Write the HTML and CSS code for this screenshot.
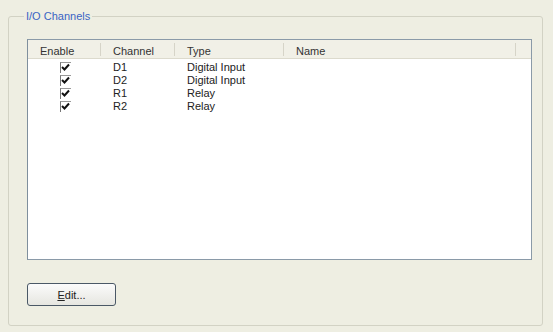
FILE: index.html
```html
<!DOCTYPE html>
<html lang="en">
<head>
	<meta charset="UTF-8">
	<title>I/O Channels</title>
	<link rel="stylesheet" href="styles.css">
</head>
<body>
	<fieldset class="group">
		<legend>I/O Channels</legend>
		<div class="list">
			<div class="head">
				<div class="col c1">Enable</div>
				<div class="col c2">Channel</div>
				<div class="col c3">Type</div>
				<div class="col c4">Name</div>
				<div class="col c5"></div>
			</div>
			<div class="row">
				<div class="c1"><span class="chk"><svg width="11" height="11" viewBox="0 0 11 11"><path d="M2 5 L4.5 7.5 L9 2.5" fill="none" stroke="#111" stroke-width="2"/></svg></span></div>
				<div class="c2">D1</div>
				<div class="c3">Digital Input</div>
			</div>
			<div class="row">
				<div class="c1"><span class="chk"><svg width="11" height="11" viewBox="0 0 11 11"><path d="M2 5 L4.5 7.5 L9 2.5" fill="none" stroke="#111" stroke-width="2"/></svg></span></div>
				<div class="c2">D2</div>
				<div class="c3">Digital Input</div>
			</div>
			<div class="row">
				<div class="c1"><span class="chk"><svg width="11" height="11" viewBox="0 0 11 11"><path d="M2 5 L4.5 7.5 L9 2.5" fill="none" stroke="#111" stroke-width="2"/></svg></span></div>
				<div class="c2">R1</div>
				<div class="c3">Relay</div>
			</div>
			<div class="row">
				<div class="c1"><span class="chk"><svg width="11" height="11" viewBox="0 0 11 11"><path d="M2 5 L4.5 7.5 L9 2.5" fill="none" stroke="#111" stroke-width="2"/></svg></span></div>
				<div class="c2">R2</div>
				<div class="c3">Relay</div>
			</div>
		</div>
		<button class="btn"><u>E</u>dit...</button>
	</fieldset>
</body>
</html>
```

FILE: styles.css
```css
body{margin:0;background:#eeeee2;font-family:"Liberation Sans",Arial,sans-serif;font-size:11px;color:#222;}

.group{margin:10px 0 0 8px;width:535px;height:316px;box-sizing:border-box;padding:16px 0 0 18px;border:1px solid #d2d2c4;border-radius:3px;}
.group legend{margin-left:-3px;padding:0 2px;color:#3a64c4;line-height:13px;font-size:11px;}

.list{width:505px;height:221px;box-sizing:border-box;background:#fff;border:1px solid #8a9aa8;border-left-color:#7f8f9d;}

.head{display:flex;height:18px;background:#f1f0e7;border-bottom:1px solid #dcdacd;color:#333;}
.head .col{box-sizing:border-box;padding-left:12px;padding-top:2px;border-right:1px solid #d6d4c8;margin:3px 0 2px;line-height:12px;}
.c1{width:73px;}
.c2{width:74px;}
.c3{width:109px;}
.c4{width:232px;}
.c5{flex:1;border-right:none !important;}

.row{display:flex;height:13px;line-height:13px;}
.head + .row{margin-top:2px;}
.row div{box-sizing:border-box;padding-left:12px;}
.row .c1{padding-left:32px;display:flex;align-items:center;}
.chk{display:block;width:11px;height:11px;box-sizing:border-box;border-left:1px solid #777;border-top:1px solid #999;}
.chk svg{display:block;margin:-1px 0 0 -1px;}

.btn{display:block;margin-top:23px;width:89px;height:23px;padding:0;font-family:inherit;font-size:11px;color:#222;background:linear-gradient(#fbfbfb,#e6e6e0);border:1px solid #4a5866;border-radius:3px;}
```
